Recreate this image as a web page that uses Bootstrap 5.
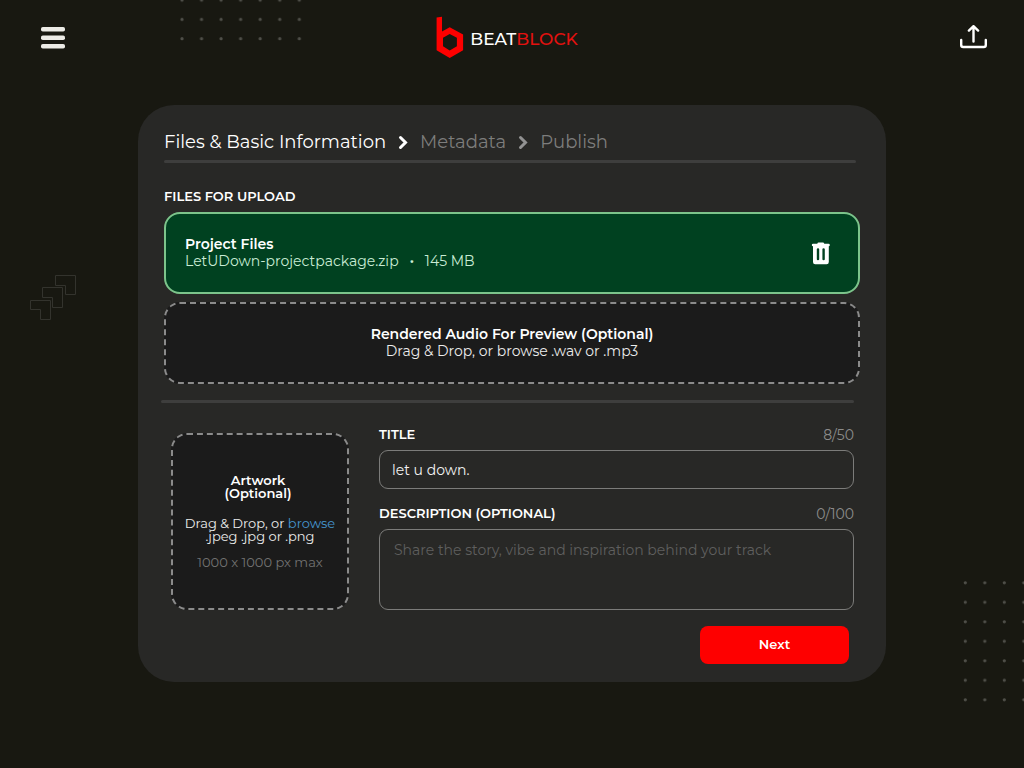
<!DOCTYPE html>
<html lang="en">
<head>
<meta charset="utf-8">
<meta name="viewport" content="width=device-width, initial-scale=1">
<title>BeatBlock – Upload</title>
<link rel="stylesheet" href="https://cdn.jsdelivr.net/npm/bootstrap@5.3.0/dist/css/bootstrap.min.css">
<style>
  body { background: #181811; color: #fff; font-family: Montserrat, Inter, sans-serif; font-size: 14px; line-height: 17px; min-height: 100vh; overflow-x: hidden; }
  svg { display: block; }
  .topbar { padding: 16px 36px 0 40px; }
  .icon-btn { background: none; border: 0; padding: 0; color: #fff; }
  .brand { margin-right: 12px; color: #fff; font-size: 17px; line-height: 24px; font-weight: 500; gap: 6px; text-decoration: none; }
  .brand span { padding-top: 3px; }
  .brand-red { color: #e3110f; }
  .upload-card { max-width: 748px; margin: 46px auto 40px; padding: 25px 26px 18px; background: #282826; border-radius: 36px; }
  .steps { font-size: 18px; line-height: 24px; gap: 12px; }
  .steps a { color: #7d7d7c; text-decoration: none; }
  .steps a.current { color: #fff; }
  .rule { height: 3px; background: #3e3e3d; border-radius: 2px; }
  .rule-upper { margin: 6px 4px 24px 0; }
  .rule-lower { margin: 16px 6px 16px -3px; }
  .caption { margin-bottom: 7px; font-size: 13px; line-height: 18px; font-weight: 600; }
  .drop { background: #1b1b1b; border: 2px dashed #8b8b8b; border-radius: 16px; }
  .file-row { height: 82px; }
  .file-row.done { background: #004120; border: 2px solid #7cc48b; padding: 0 27px 0 19px; }
  .soft { color: #ececec; }
  .done .soft { color: #c9ecd5; }
  .details { padding: 0 6px 0 7px; gap: 30px; }
  .artwork { width: 178px; height: 177px; margin-top: 14px; font-size: 13px; line-height: 13px; gap: 13px; }
  .artwork a { color: #4596cf; text-decoration: none; }
  .hint { color: #737373; }
  .form-side { padding-top: 6px; }
  .label-gap { margin-top: 15px; }
  .count { color: #8c8c8b; font-size: 14px; line-height: 20px; }
  .field, .field:focus { background: transparent; color: #f2f2f2; border: 1px solid #7c7c7a; border-radius: 9px; font-size: 14px; box-shadow: none; }
  .field::placeholder { color: #5f5f5e; opacity: 1; }
  input.field { height: 39px; padding: 0 12px; }
  textarea.field { height: 81px; padding: 10px 14px; line-height: 20px; resize: none; }
  .next, .next:hover { width: 149px; height: 38px; margin-right: 11px; background: #fe0000; border: 0; border-radius: 8px; color: #fff; font-size: 13px; font-weight: 600; }
  .deco { position: absolute; pointer-events: none; }
  .dots-top { top: 0; left: 180px; }
  .dots-side { top: 580px; right: 0; }
  .blocks { top: 274px; left: 29px; }
</style>
</head>
<body class="position-relative">
<svg class="deco dots-top" width="123" height="42" aria-hidden="true">
  <defs><pattern id="dotTop" width="19.55" height="19.3" patternUnits="userSpaceOnUse" y="-1.5"><circle cx="2" cy="1.6" r="1.6" fill="#4f4f49"/></pattern></defs>
  <rect width="123" height="42" fill="url(#dotTop)"/>
</svg>
<svg class="deco dots-side" width="61" height="123" aria-hidden="true">
  <defs><pattern id="dotSide" width="19.5" height="19.5" patternUnits="userSpaceOnUse"><circle cx="2.3" cy="2.8" r="1.6" fill="#4f4f49"/></pattern></defs>
  <rect width="61" height="123" fill="url(#dotSide)"/>
</svg>
<svg class="deco blocks" width="48" height="48" fill="none" stroke="#33332d" aria-hidden="true">
  <path d="M26.500 1.500h20v19h-10v-9h-10zM13.500 13.500h20v20h-10v-10h-10zM1.500 26.500h20v19h-10v-10h-10z"/>
</svg>

<header class="topbar d-flex justify-content-between align-items-center">
  <button class="icon-btn" type="button" aria-label="Menu">
    <svg width="26" height="24" fill="#ecebe6"><rect x="1" y="1" width="24" height="4.500" rx="1.800"/><rect x="1" y="9.500" width="24" height="4.500" rx="1.800"/><rect x="1" y="18" width="24" height="4.500" rx="1.800"/></svg>
  </button>
  <a class="brand d-flex align-items-center" href="#">
    <svg width="28" height="43" viewBox="0 0 28 43" aria-hidden="true"><path fill="#fe0000" fill-rule="evenodd" d="M.6 1.600 6 .8v14.700l7.700-4.300 13.400 7.400v15.600l-13.400 7.700L.6 34.200zM13.700 18 7 21.800v8.400l6.700 4.200 7.200-4.200v-8.400z"/></svg>
    <span>BEAT<span class="brand-red">BLOCK</span></span>
  </a>
  <button class="icon-btn" type="button" aria-label="Upload">
    <svg width="28" height="26" fill="none" stroke="#fff" stroke-width="2.400" stroke-linecap="round" stroke-linejoin="round"><path d="M13.500 16.500V1.500M8.900 5.600l4.600-4.400 4.600 4.400M1.200 15v5q0 2 2 2h20.600q2 0 2-2v-5"/></svg>
  </button>
</header>

<main class="px-3">
  <form class="upload-card">
    <nav class="steps d-flex align-items-center" aria-label="Steps">
      <a class="current" href="#" aria-current="step">Files &amp; Basic Information</a>
      <svg width="10" height="15" fill="none" stroke="#fff" stroke-width="3" stroke-linecap="round"><path d="m2.500 2.500 5 5-5 5"/></svg>
      <a href="#">Metadata</a>
      <svg width="10" height="15" fill="none" stroke="#929292" stroke-width="3" stroke-linecap="round"><path d="m2.500 2.500 5 5-5 5"/></svg>
      <a href="#">Publish</a>
    </nav>
    <div class="rule rule-upper"></div>

    <h2 class="caption">FILES FOR UPLOAD</h2>
    <div class="drop file-row done d-flex justify-content-between align-items-center">
      <div>
        <div class="fw-semibold">Project Files</div>
        <div class="soft">LetUDown-projectpackage.zip &nbsp; <b>·</b> &nbsp; 145 MB</div>
      </div>
      <button class="icon-btn" type="button" aria-label="Delete file">
        <svg width="20" height="23" viewBox="0 0 20 23"><path fill="#fff" fill-rule="evenodd" d="M6.500 1.200Q6.500.4 7.500.4h4.500q1 0 1 .8l.3.500H17.500q1.300 0 1.300 1.300t-1 1.300V20q0 2.200-2.200 2.200H4.200Q2 22.200 2 20V4.300Q.8 4.300.8 3t1.300-1.300h4.200zM5.800 7.200v10q0 1 1.200 1t1.200-1v-10q0-1-1.200-1t-1.200 1zm5.600 0v10q0 1 1.200 1t1.200-1v-10q0-1-1.200-1t-1.200 1z"/></svg>
      </button>
    </div>
    <div class="drop file-row mt-2 d-flex flex-column justify-content-center text-center">
      <div class="fw-semibold">Rendered Audio For Preview (Optional)</div>
      <div class="soft">Drag &amp; Drop, or browse .wav or .mp3</div>
    </div>
    <div class="rule rule-lower"></div>

    <div class="details d-flex flex-wrap flex-sm-nowrap">
      <div class="drop artwork flex-shrink-0 d-flex flex-column justify-content-center text-center">
        <div class="fw-semibold pe-1 mb-1">Artwork<br>(Optional)</div>
        <div class="soft">Drag &amp; Drop, or <a href="#">browse</a><br>.jpeg .jpg or .png</div>
        <div class="hint">1000 x 1000 px max</div>
      </div>
      <div class="form-side flex-grow-1">
        <div class="d-flex justify-content-between">
          <label class="caption" for="title">TITLE</label><span class="count">8/50</span>
        </div>
        <input class="form-control field" id="title" type="text" value="let u down." maxlength="50">
        <div class="label-gap d-flex justify-content-between">
          <label class="caption" for="description">DESCRIPTION (OPTIONAL)</label><span class="count">0/100</span>
        </div>
        <textarea class="form-control field" id="description" maxlength="100" placeholder="Share the story, vibe and inspiration behind your track"></textarea>
      </div>
    </div>
    <div class="d-flex justify-content-end mt-3">
      <button class="btn next" type="button">Next</button>
    </div>
  </form>
</main>
<script src="https://cdn.jsdelivr.net/npm/bootstrap@5.3.0/dist/js/bootstrap.bundle.min.js"></script>
</body>
</html>
